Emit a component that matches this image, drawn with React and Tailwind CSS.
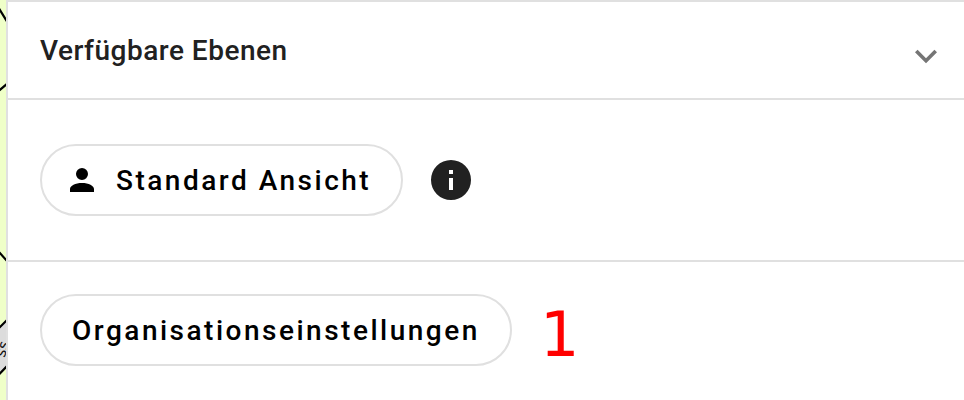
function MapStrip() {
  return (
    <svg className="block h-[400px] w-1.5 shrink-0 bg-[#efffc8]" viewBox="0 0 6 400">
      <path d="M-2 329 L8 319 V364 L-2 375 Z" fill="#dcdcdc" />
      <path
        d="M-2 7 L8 23 M-2 91.5 L8 83 M-2 251 L8 262 M-2 329 L8 319 M-2 375.5 L8 365"
        fill="none"
        stroke="#000"
        strokeWidth="2.2"
      />
      <text
        transform="translate(4.5 358) rotate(-72)"
        fontSize="15"
        fontFamily="'DejaVu Sans', sans-serif"
        fill="#111"
      >
        ss
      </text>
    </svg>
  );
}

function Icon({ d, className }) {
  return (
    <svg viewBox="0 0 24 24" fill="currentColor" className={className}>
      <path d={d} />
    </svg>
  );
}

function PillButton({ children, className }) {
  return (
    <button
      className={`flex h-[72px] items-center rounded-full border-2 border-[#e0e0e0] text-[28px] leading-none font-medium tracking-[2.5px] whitespace-nowrap text-black ${className}`}
    >
      {children}
    </button>
  );
}

export default function App() {
  return (
    <div className="flex h-[400px] w-[964px] overflow-hidden bg-white font-['Roboto',sans-serif]">
      <MapStrip />
      <main className="min-w-0 flex-1 border-t-2 border-l-2 border-[#e0e0e0]">
        <header className="flex h-[98px] items-center justify-between border-b-2 border-[#e0e0e0] pr-4 pl-8">
          <h1 className="pt-0.5 text-[28px] leading-10 font-medium tracking-[0.5px] text-[#212121]">
            Verfügbare Ebenen
          </h1>
          <Icon
            className="mt-[11px] size-11 text-[#757575]"
            d="M7.41,8.58L12,13.17L16.59,8.58L18,10L12,16L6,10L7.41,8.58Z"
          />
        </header>
        <section className="flex h-[162px] items-center gap-6 border-b-2 border-[#e0e0e0] pl-8">
          <PillButton className="w-[363px] gap-4 pl-[22px]">
            <Icon
              className="size-9 shrink-0"
              d="M12,4A4,4 0 0,1 16,8A4,4 0 0,1 12,12A4,4 0 0,1 8,8A4,4 0 0,1 12,4M12,14C16.42,14 20,15.79 20,18V20H4V18C4,15.79 7.58,14 12,14Z"
            />
            <span className="pt-0.5">Standard Ansicht</span>
          </PillButton>
          <Icon
            className="size-12 text-[#212121]"
            d="M13,9H11V7H13M13,17H11V11H13M12,2A10,10 0 0,0 2,12A10,10 0 0,0 12,22A10,10 0 0,0 22,12A10,10 0 0,0 12,2Z"
          />
        </section>
        <section className="flex items-start pt-8 pl-8">
          <PillButton className="w-[472px] pl-[30px]">
            <span className="pt-0.5">Organisationseinstellungen</span>
          </PillButton>
          <span className="ml-7 pt-2.5 font-['DejaVu_Sans',sans-serif] text-[62px] leading-[62px] text-[#ff0000]">
            1
          </span>
        </section>
      </main>
    </div>
  );
}
